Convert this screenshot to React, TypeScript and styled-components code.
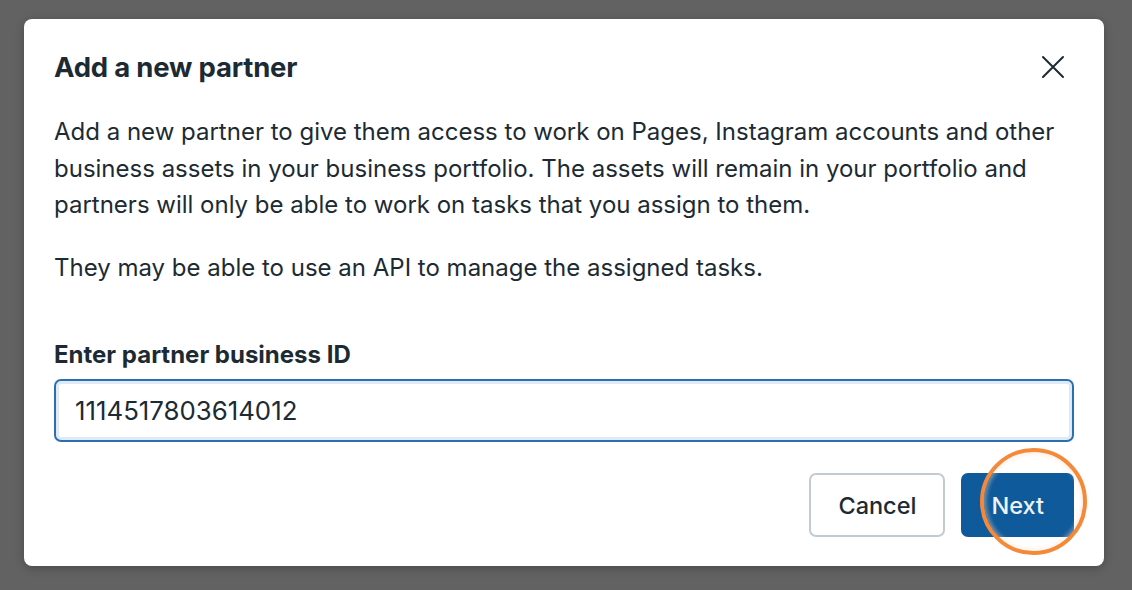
import * as React from 'react';
import styled, { createGlobalStyle } from 'styled-components';

const GlobalStyle = createGlobalStyle`
  html, body {
    margin: 0;
    padding: 0;
    background: #626262;
  }
  body {
    font-family: Inter, "Noto Sans", "Liberation Sans", sans-serif;
    color: #1c2b33;
  }
`;

const Backdrop = styled.div`
  width: 1132px;
  height: 590px;
  box-sizing: border-box;
  padding: 19px 28px 24px 24px;
  display: flex;
`;

const Dialog = styled.div`
  position: relative;
  flex: 1;
  background: #ffffff;
  border-radius: 8px;
  box-shadow: 0 2px 10px rgba(0, 0, 0, 0.25);
  padding: 30px 30px 29px 30px;
  display: flex;
  flex-direction: column;
  box-sizing: border-box;
`;

const Header = styled.div`
  display: flex;
  align-items: center;
  justify-content: space-between;
  height: 36px;
`;

const Title = styled.h2`
  margin: 0;
  font-size: 27.5px;
  font-weight: 700;
  letter-spacing: -0.2px;
`;

const CloseButton = styled.button`
  border: none;
  background: none;
  padding: 0;
  width: 28px;
  height: 28px;
  display: flex;
  align-items: center;
  justify-content: center;
  margin-right: 7px;
  cursor: pointer;
`;

const Paragraph = styled.p<{ $gap?: number }>`
  margin: ${(p) => p.$gap ?? 0}px 0 0 0;
  font-size: 24px;
  line-height: 36.5px;
  font-weight: 400;
`;

const Label = styled.label`
  display: block;
  margin-top: 54px;
  font-size: 24px;
  line-height: 30px;
  font-weight: 700;
`;

const Input = styled.input`
  margin: 9px 0 0 0;
  height: 63px;
  box-sizing: border-box;
  border: 2px solid #2a6fb0;
  border-radius: 7px;
  box-shadow: inset 0 0 0 3px #dfeaf5;
  padding: 0 19px;
  font-family: inherit;
  font-size: 25.8px;
  color: #1c2b33;
  outline: none;
`;

const Footer = styled.div`
  margin-top: auto;
  display: flex;
  justify-content: flex-end;
  gap: 16px;
`;

const Button = styled.button<{ $primary?: boolean }>`
  height: 64px;
  box-sizing: border-box;
  padding: 0 ${(p) => (p.$primary ? 28 : 27)}px;
  border-radius: 7px;
  font-family: inherit;
  font-size: 23.5px;
  font-weight: 500;
  cursor: pointer;
  border: 2px solid ${(p) => (p.$primary ? '#0f5a9b' : '#c3cbd2')};
  background: ${(p) => (p.$primary ? '#0f5a9b' : '#ffffff')};
  color: ${(p) => (p.$primary ? '#eef3f8' : '#1c2b33')};
`;

const Highlight = styled.div`
  position: absolute;
  left: 956px;
  top: 429px;
  width: 107px;
  height: 107px;
  box-sizing: border-box;
  border-radius: 50%;
  border: 4px solid #f5893a;
  box-shadow: inset 0 0 4px 2px rgba(255, 225, 200, 0.45);
  pointer-events: none;
`;

export default function App() {
  return (
    <>
      <GlobalStyle />
      <Backdrop>
        <Dialog>
          <Header>
            <Title>Add a new partner</Title>
            <CloseButton aria-label="Close">
              <svg width="24" height="24" viewBox="0 0 24 24">
                <path d="M2 2 L22 22 M22 2 L2 22" stroke="#1c2b33" strokeWidth="2" strokeLinecap="round" />
              </svg>
            </CloseButton>
          </Header>
          <Paragraph $gap={29}>
            Add a new partner to give them access to work on Pages, Instagram accounts and other
            <br />
            business assets in your business portfolio. The assets will remain in your portfolio and
            <br />
            partners will only be able to work on tasks that you assign to them.
          </Paragraph>
          <Paragraph $gap={26}>They may be able to use an API to manage the assigned tasks.</Paragraph>
          <Label htmlFor="partner-id">Enter partner business ID</Label>
          <Input id="partner-id" defaultValue="1114517803614012" />
          <Footer>
            <Button>Cancel</Button>
            <Button $primary>Next</Button>
          </Footer>
          <Highlight />
        </Dialog>
      </Backdrop>
    </>
  );
}
